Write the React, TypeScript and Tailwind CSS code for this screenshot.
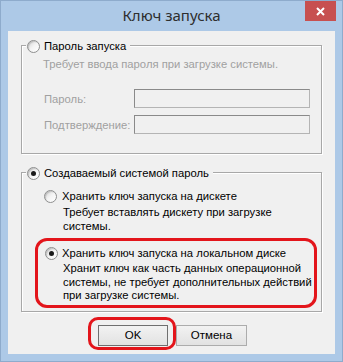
import React from "react";

const font = { fontFamily: '"Liberation Sans", Arial, sans-serif' };

const Radio = ({ checked = false }: { checked?: boolean }) => (
  <span className="flex h-[13px] w-[13px] shrink-0 items-center justify-center rounded-full border border-[#8e8f8f] bg-gradient-to-br from-[#d4d4d4] via-[#f4f4f4] to-[#ffffff] shadow-[inset_1px_1px_1px_rgba(0,0,0,0.15)]">
    {checked && <span className="block h-[5px] w-[5px] rounded-full bg-[#1a1a1a]" />}
  </span>
);

const GroupHeader = ({ label, checked }: { label: string; checked?: boolean }) => (
  <div className="-mt-[7px] ml-[4px] flex h-[14px] w-fit items-center gap-[4px] bg-[#f0f0f0] pl-[1px] pr-[4px] text-[#000]">
    <Radio checked={checked} />
    <span className="leading-[14px]">{label}</span>
  </div>
);

const Field = ({ label }: { label: string }) => (
  <div className="flex items-center">
    <span className="w-[90px] text-[#a0a0a0] leading-[14px]">{label}</span>
    <span className="block h-[19px] w-[176px] border border-[#b4b4b4] border-l-[#8a8a8a] border-t-[#8a8a8a] bg-[#f0f0f0]" />
  </div>
);

const Button = ({ label, className = "" }: { label: string; className?: string }) => (
  <button
    type="button"
    className={`flex h-[21px] items-center justify-center bg-gradient-to-b from-[#f2f2f2] to-[#e2e2e2] text-[11.5px] text-[#000] ${className}`}
  >
    {label}
  </button>
);

export default function App() {
  return (
    <div
      className="flex h-[362px] w-[343px] flex-col whitespace-nowrap border border-[#8eabcc] bg-[#adc9e7] text-[11.25px]"
      style={font}
    >
      <div className="grid h-[30px] grid-cols-[1fr_auto_1fr]">
        <div />
        <div
          className="pt-[4px] text-[15px] leading-[20px] text-[#2e2e2e]"
          style={{ fontFamily: '"Noto Sans", "Open Sans", sans-serif' }}
        >
          Ключ запуска
        </div>
        <div className="flex justify-end pr-[6px]">
          <div className="flex h-[20px] w-[31px] items-center justify-center bg-[#c75050]">
            <svg width="9" height="9" viewBox="0 0 9 9">
              <path d="M1 1l7 7M8 1l-7 7" stroke="#fff" strokeWidth="2" />
            </svg>
          </div>
        </div>
      </div>

      <div className="mx-[7px] flex h-[323px] flex-col bg-[#f0f0f0]">
        {/* group 1 */}
        <div className="mx-[13px] mt-[14px] flex h-[109px] flex-col border border-[#a8a8a8] shadow-[inset_1px_1px_0_#fff,1px_1px_0_#fff]">
          <GroupHeader label="Пароль запуска" />
          <div className="mt-[4px] pl-[21px] leading-[14px] text-[#a0a0a0]">
            Требует ввода пароля при загрузке системы.
          </div>
          <div className="mt-[18px] flex flex-col gap-[7px] pl-[22px]">
            <Field label="Пароль:" />
            <Field label="Подтверждение:" />
          </div>
        </div>

        {/* group 2 */}
        <div className="mx-[13px] mt-[18px] flex h-[140px] flex-col border border-[#a8a8a8] shadow-[inset_1px_1px_0_#fff,1px_1px_0_#fff]">
          <GroupHeader label="Создаваемый системой пароль" checked />
          <div className="mt-[9px] pl-[22px]">
            <div className="flex h-[14px] items-center gap-[5px]">
              <Radio />
              <span className="leading-[14px]">Хранить ключ запуска на дискете</span>
            </div>
            <div className="mt-[3px] pl-[19px] leading-[13.5px]">
              Требует вставлять дискету при загрузке
              <br />
              системы.
            </div>
          </div>
          <div className="ml-[13px] mr-[4px] mt-[5px] rounded-[12px] border-[3px] border-[#e3151b] pb-[2px] pl-[7px] pt-[5px]">
            <div className="flex h-[14px] items-center gap-[4px]">
              <Radio checked />
              <span className="leading-[14px]">Хранить ключ запуска на локальном диске</span>
            </div>
            <div className="mt-[2px] pl-[18px] leading-[13.5px]">
              Хранит ключ как часть данных операционной
              <br />
              системы, не требует дополнительных действий
              <br />
              при загрузке системы.
            </div>
          </div>
        </div>

        {/* buttons */}
        <div className="mt-[5px] flex items-start pl-[80px]">
          <div className="rounded-[10px] border-[3px] border-[#e3151b] pb-[1px] pl-[7px] pr-[5px] pt-[5px]">
            <Button label="OK" className="w-[70px] border border-[#6f6f6f]" />
          </div>
          <Button label="Отмена" className="mt-[8px] w-[71px] border border-[#acacac]" />
        </div>
      </div>
    </div>
  );
}
